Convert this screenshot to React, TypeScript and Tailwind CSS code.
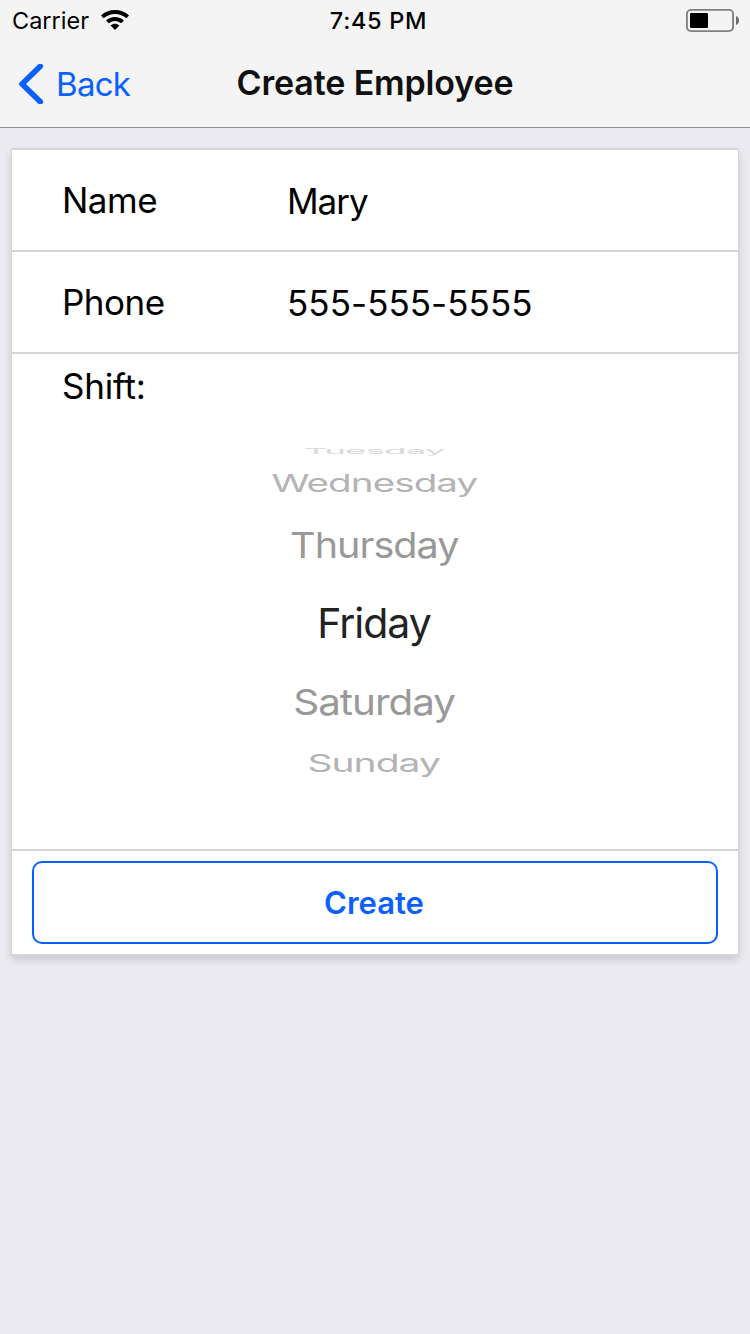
const days = [
  { name: "Tuesday", box: "flex h-[19px] items-center text-[#d9d9d9]", text: "scale-x-[0.897] scale-y-[0.2]" },
  { name: "Wednesday", box: "flex h-[47px] items-center text-[#b4b4b4]", text: "scale-x-[0.941] scale-y-[0.6]" },
  { name: "Thursday", box: "flex h-[77px] items-center text-[#999999]", text: "scale-x-[0.965] scale-y-[0.87]" },
  { name: "Friday", box: "flex h-[79px] items-center text-[#222222]", text: "pt-px" },
  { name: "Saturday", box: "flex h-[80px] items-center text-[#999999]", text: "scale-x-[0.985] scale-y-[0.88]" },
  { name: "Sunday", box: "flex h-[42px] items-center text-[#b4b4b4]", text: "scale-x-[0.951] scale-y-[0.59]" },
];

function StatusBar() {
  return (
    <div className="grid h-[41px] grid-cols-[300px_157px_1fr] items-center text-[23.5px] leading-7">
      <div className="flex items-center gap-3 pl-3">
        <span>Carrier</span>
        <svg className="mb-px h-5 w-7" viewBox="0 0 28 20">
          <path d="M14 0C8.500 0 3.600 2 0 5.400L2.600 8.200C5.600 5.500 9.600 3.900 14 3.900s8.400 1.600 11.400 4.300L28 5.400C24.400 2 19.500 0 14 0Z" />
          <path d="M14 6.900c-3.500 0-6.600 1.300-9 3.500l2.800 2.900c1.700-1.500 3.800-2.400 6.200-2.400s4.500.9 6.200 2.400l2.800-2.900c-2.400-2.200-5.500-3.500-9-3.500Z" />
          <path d="M14 13.800c-1.700 0-3.200.6-4.400 1.600L14 19.900l4.400-4.500c-1.200-1-2.700-1.600-4.400-1.600Z" />
        </svg>
      </div>
      <span className="text-center font-medium tracking-[0.7px]">7:45 PM</span>
      <svg className="mt-px mr-[10px] h-6 w-[54px] justify-self-end" viewBox="0 0 54 24" fill="none">
        <rect x="0.900" y="0.900" width="46.200" height="21.200" rx="4" stroke="#808080" strokeWidth="1.900" />
        <rect x="4" y="4" width="18" height="15" rx="1.200" fill="#000" />
        <path d="M50 7c2 .8 3 2.500 3 4.500s-1 3.700-3 4.500Z" fill="#6b6b6b" />
      </svg>
    </div>
  );
}

function Field({ label, value, valueClass }: { label: string; value: string; valueClass: string }) {
  return (
    <div className="flex h-[102px] items-center border-b-2 border-[#d5d5d6] pl-[50px]">
      <span className="w-[225px] tracking-[-0.5px]">{label}</span>
      <span className={valueClass}>{value}</span>
    </div>
  );
}

export default function App() {
  return (
    <div className="flex h-[1334px] w-[750px] flex-col bg-[#ebebf1] font-['Inter',sans-serif] text-black">
      <header className="h-32 border-b border-[#8e8e8f] bg-[#f4f4f4]">
        <StatusBar />
        <div className="grid h-[86px] grid-cols-[200px_350px_200px] items-center text-[33px]">
          <div className="flex items-center gap-[11px] pl-[18px] text-[#0a60ff]">
            <svg className="mb-px h-10 w-[27px]" viewBox="0 0 27 40" fill="none">
              <path d="M22.300 2.300L4 20l18.300 17.700" stroke="currentColor" strokeWidth="5.600" strokeLinecap="round" strokeLinejoin="round" />
            </svg>
            <span className="pt-px tracking-[-0.7px]">Back</span>
          </div>
          <h1 className="pb-[3px] text-center text-[34px] font-semibold tracking-[-0.15px] text-[#111111]">Create Employee</h1>
        </div>
      </header>
      <main className="mx-[11px] mt-5 rounded-t-[2px] border-x border-y-2 border-[#d5d5d6] bg-white text-[35px] shadow-[0_4px_8px_rgba(0,0,0,0.15)]">
        <Field label="Name" value="Mary" valueClass="pt-[3px] tracking-[-1px]" />
        <Field label="Phone" value="555-555-5555" valueClass="pt-[3px] tracking-[0.05px]" />
        <div className="h-[497px] border-b-2 border-[#d5d5d6]">
          <div className="flex h-16 items-center pl-[50px] tracking-[-0.2px]">Shift:</div>
          <div className="flex flex-col items-center pt-[23px] pr-0.5 text-[41px] tracking-[-1px]">
            {days.map((d) => (
              <div key={d.name} className={d.box}>
                <span className={d.text}>{d.name}</span>
              </div>
            ))}
          </div>
        </div>
        <button className="mx-5 my-[10px] block h-[83px] w-[686px] rounded-[10px] border-2 border-[#0a60ff] pt-px pr-0.5 text-[31px] font-semibold text-[#0a60ff]">
          Create
        </button>
      </main>
    </div>
  );
}
